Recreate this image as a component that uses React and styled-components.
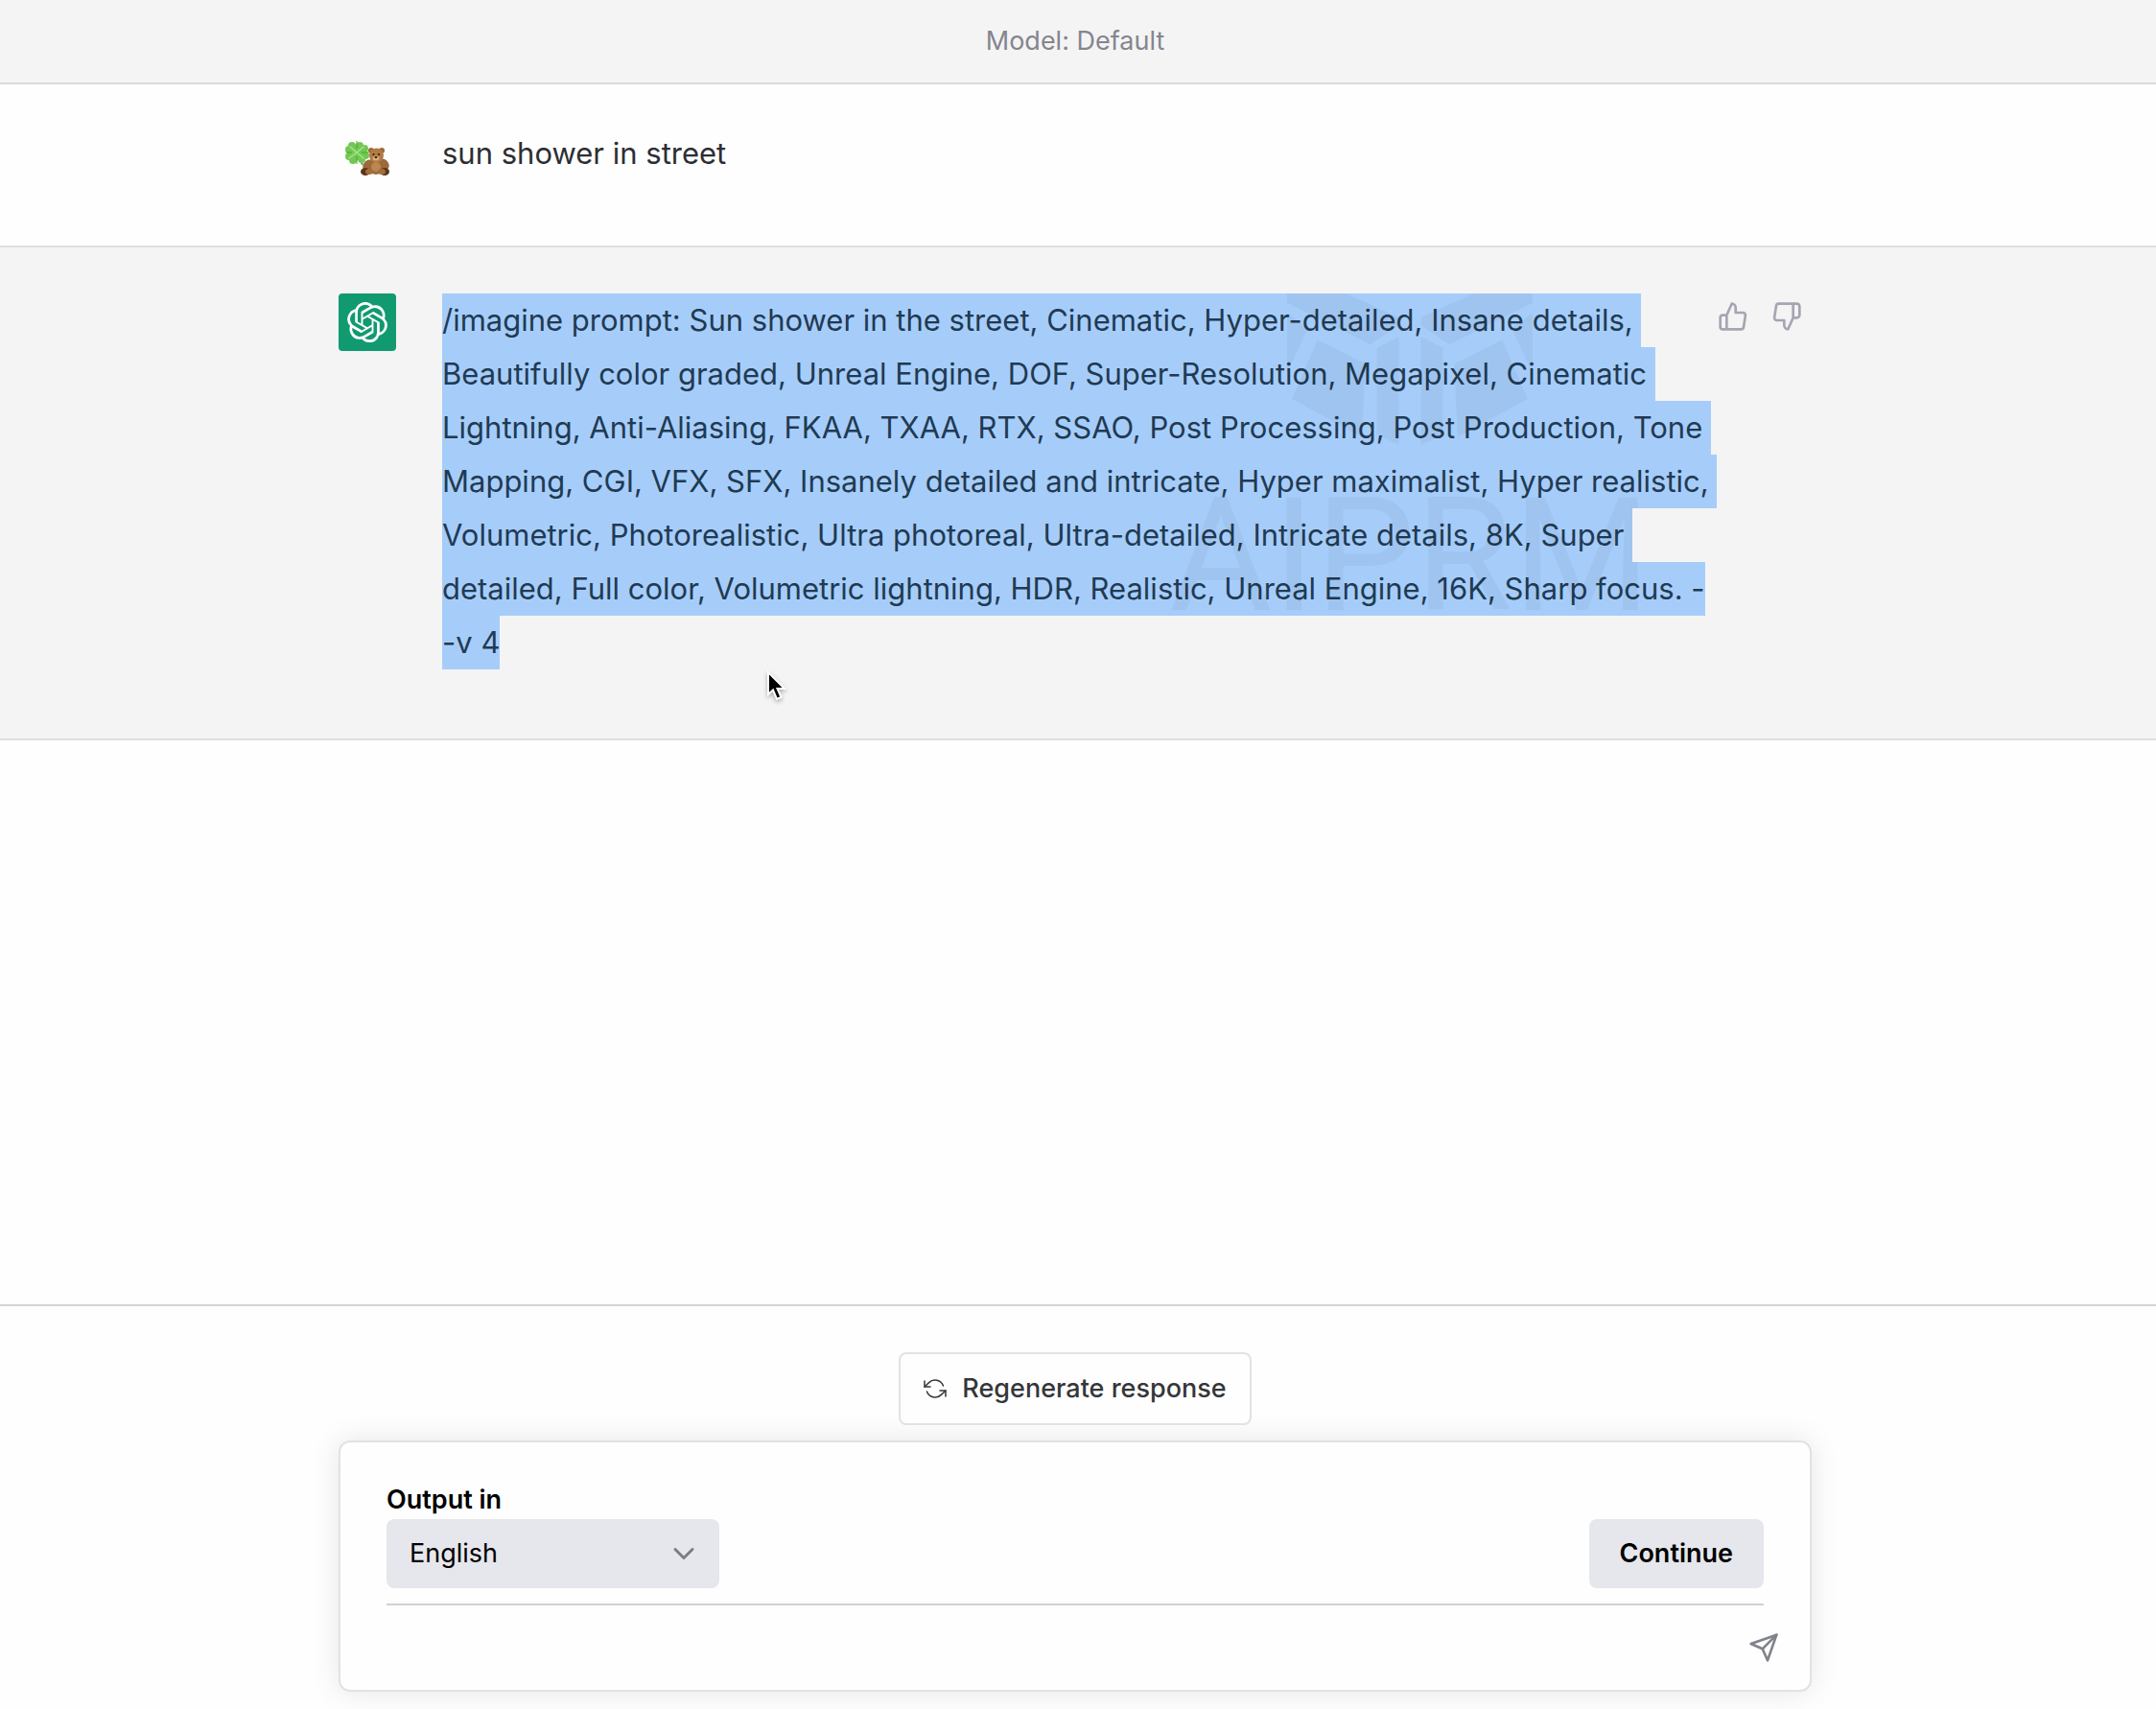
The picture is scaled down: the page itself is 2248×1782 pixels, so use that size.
import React from "react";
import styled, { createGlobalStyle } from "styled-components";
import { SiOpenai } from "react-icons/si";
import {
  FiChevronDown,
  FiRefreshCcw,
  FiSend,
  FiThumbsDown,
  FiThumbsUp,
} from "react-icons/fi";

const promptLines = [
  "/imagine prompt: Sun shower in the street, Cinematic, Hyper-detailed, Insane details, ",
  "Beautifully color graded, Unreal Engine, DOF, Super-Resolution, Megapixel, Cinematic ",
  "Lightning, Anti-Aliasing, FKAA, TXAA, RTX, SSAO, Post Processing, Post Production, Tone ",
  "Mapping, CGI, VFX, SFX, Insanely detailed and intricate, Hyper maximalist, Hyper realistic, ",
  "Volumetric, Photorealistic, Ultra photoreal, Ultra-detailed, Intricate details, 8K, Super ",
  "detailed, Full color, Volumetric lightning, HDR, Realistic, Unreal Engine, 16K, Sharp focus. -",
  "-v 4",
];

const CloverBear = () => (
  <svg width="60" height="40" viewBox="0 0 60 40" aria-hidden="true">
    <path
      d="M19 13c2 4 4 8 6 13"
      stroke="#5fae3c"
      strokeWidth="2"
      fill="none"
    />
    <g fill="#72c853">
      <circle cx="14" cy="6" r="4" />
      <circle cx="22" cy="6" r="4" />
      <circle cx="11" cy="10" r="4" />
      <circle cx="27" cy="9" r="4" />
      <circle cx="11" cy="17" r="4" />
      <circle cx="28" cy="16" r="4" />
      <circle cx="15" cy="21" r="4" />
      <circle cx="24" cy="20" r="4" />
      <circle cx="19" cy="13" r="8" />
    </g>
    <path
      d="M19 13L12 7M19 13L11 19M19 13L26 7M19 13L26 19"
      stroke="#a5e58a"
      strokeWidth="1.5"
      strokeLinecap="round"
    />
    <path
      d="M19 9V1M8 13H14M24 13H31M19 17V25"
      stroke="#4ca336"
      strokeWidth="1"
    />
    <g fill="#9c6a3a">
      <circle cx="34" cy="11" r="3" />
      <circle cx="45" cy="11" r="3" />
      <ellipse cx="39" cy="27" rx="9" ry="9" />
      <ellipse cx="30" cy="26" rx="4" ry="6" transform="rotate(35 30 26)" />
      <ellipse cx="48" cy="25" rx="4" ry="6" transform="rotate(-35 48 25)" />
    </g>
    <circle cx="39.500" cy="16" r="7.500" fill="#b07a45" />
    <ellipse cx="39" cy="28" rx="5" ry="5" fill="#bd8650" />
    <ellipse cx="28" cy="33" rx="5" ry="4" fill="#5b3519" />
    <ellipse cx="48" cy="33" rx="5" ry="4" fill="#5b3519" />
    <ellipse cx="32" cy="33" rx="4" ry="3" fill="#a26e3c" />
    <ellipse cx="45" cy="33" rx="4" ry="3" fill="#a26e3c" />
    <ellipse cx="39" cy="19" rx="3.500" ry="2.500" fill="#d9ae78" />
    <circle cx="36.500" cy="15" r="1" fill="#2b170a" />
    <circle cx="42" cy="15" r="1" fill="#2b170a" />
    <ellipse cx="39" cy="18" rx="1.500" ry="1" fill="#2b170a" />
  </svg>
);

const WatermarkLogo = () => (
  <svg width="256" height="160" viewBox="65 30 768 480" aria-hidden="true">
    <g id="half">
      <path d="M65 30H250L415 105V130L325 190L65 60Z" />
      <path d="M65 90L130 140L65 280Z" />
      <path d="M160 175L310 250L300 480L80 360Z" />
      <path d="M345 200L415 165V505L345 470Z" />
    </g>
    <use href="#half" transform="matrix(-1 0 0 1 898 0)" />
  </svg>
);

const App = () => {
  return (
    <Page>
      <GlobalStyle />
      <Header>Model: Default</Header>
      <main>
        <Message>
          <Row $top={44} $bottom={56}>
            <UserAvatar>
              <CloverBear />
            </UserAvatar>
            <Prose>sun shower in street</Prose>
          </Row>
        </Message>
        <Message $shaded>
          <Row $top={48} $bottom={72}>
            <BotAvatar>
              <SiOpenai size={42} />
            </BotAvatar>
            <Prose>
              <Watermark aria-hidden="true">
                <WatermarkLogo />
                <WatermarkText>AIPRM</WatermarkText>
              </Watermark>
              {promptLines.map((line) => (
                <Line key={line}>
                  <Selected>{line}</Selected>
                </Line>
              ))}
            </Prose>
            <Actions>
              <IconButton aria-label="Good response">
                <FiThumbsUp size={32} />
              </IconButton>
              <IconButton aria-label="Bad response">
                <FiThumbsDown size={32} />
              </IconButton>
            </Actions>
          </Row>
          <Cursor width="24" height="36" viewBox="0 0 24 36">
            <path
              d="M3 3V26L8 21.500L12 31L16.500 29L12.500 20H20Z"
              fill="#000"
              stroke="#fff"
              strokeWidth="2"
            />
          </Cursor>
        </Message>
      </main>
      <Footer>
        <Column>
          <Regenerate type="button">
            <FiRefreshCcw size={24} strokeWidth={1.5} />
            Regenerate response
          </Regenerate>
          <Composer onSubmit={(e) => e.preventDefault()}>
            <Label htmlFor="language">Output in</Label>
            <Controls>
              <SelectWrap>
                <Select id="language" defaultValue="English">
                  <option>English</option>
                </Select>
                <Chevron size={36} />
              </SelectWrap>
              <Continue type="button">Continue</Continue>
            </Controls>
            <InputRow>
              <Input rows={1} aria-label="Message" />
              <SendButton aria-label="Send">
                <FiSend size={32} />
              </SendButton>
            </InputRow>
          </Composer>
        </Column>
      </Footer>
    </Page>
  );
};

export default App;

const GlobalStyle = createGlobalStyle`
  * {
    box-sizing: border-box;
  }
  body {
    margin: 0;
    background: #fefefe;
  }
  button, select, textarea {
    font: inherit;
    color: inherit;
    margin: 0;
  }
`;

const Page = styled.div`
  display: flex;
  flex-direction: column;
  min-height: 100vh;
  font-family: Inter, "Noto Sans", sans-serif;
  font-size: 27px;
  line-height: 40px;
  color: #000;
`;

const Header = styled.header`
  padding: 23px 6px 23px 0;
  border-bottom: 2px solid #dadadc;
  background: #f4f4f4;
  color: #85858f;
  text-align: center;
`;

const Message = styled.section`
  position: relative;
  padding-right: 6px;
  border-bottom: 2px solid #dededf;
  background: ${(p) => (p.$shaded ? "#f4f4f4" : "#fefefe")};
`;

const Column = styled.div`
  display: flex;
  flex-direction: column;
  align-items: center;
  gap: 16px;
  max-width: 1536px;
  margin: 0 auto;
`;

const Row = styled.div`
  display: flex;
  align-items: flex-start;
  max-width: 1536px;
  margin: 0 auto;
  padding: ${(p) => p.$top}px 0 ${(p) => p.$bottom}px;
`;

const UserAvatar = styled.div`
  display: flex;
  align-items: center;
  justify-content: center;
  flex: none;
  width: 60px;
  height: 68px;
  margin-right: 48px;
`;

const BotAvatar = styled(UserAvatar)`
  height: 60px;
  border-radius: 4px;
  background: #119a70;
  color: #fff;
`;

const Prose = styled.div`
  position: relative;
  flex: 1;
  min-width: 0;
  font-size: 31px;
  line-height: 56px;
  color: #2d2e33;
`;

const Line = styled.div`
  display: flex;
  white-space: pre;
  /* keeps the watermark inside the selection */
  &::after {
    content: "";
    position: relative;
    flex: 1;
    background: #f4f4f4;
  }
`;

const Selected = styled.span`
  flex: none;
  background: #a6cdfa;
  color: #213a52;
`;

const Watermark = styled.div`
  position: absolute;
  top: 0;
  left: 758px;
  display: flex;
  flex-direction: column;
  align-items: center;
  fill: rgba(0, 0, 0, 0.04);
  color: rgba(0, 0, 0, 0.04);
  pointer-events: none;
`;

const WatermarkText = styled.span`
  margin-top: 26px;
  font-family: Roboto, sans-serif;
  font-size: 165px;
  line-height: 176px;
`;

const Actions = styled.div`
  display: flex;
  gap: 8px;
  padding-right: 2px;
  color: #a5a5b3;
`;

const IconButton = styled.button`
  display: flex;
  padding: 8px;
  border: 0;
  background: none;
`;

const Cursor = styled.svg`
  position: absolute;
  top: 440px;
  left: 798px;
  filter: drop-shadow(0 2px 2px rgba(0, 0, 0, 0.3));
`;

const Footer = styled.footer`
  margin-top: auto;
  padding: 48px 6px 18px 0;
  border-top: 2px solid #d3d4d8;
`;

const Regenerate = styled.button`
  position: relative;
  display: flex;
  align-items: center;
  gap: 16px;
  height: 76px;
  padding: 0 24px;
  border: 2px solid #e2e2e3;
  border-radius: 8px;
  background: #fefefe;
  color: #353639;
  font-weight: 500;
`;

const Composer = styled.form`
  width: 100%;
  padding-top: 40px;
  border: 2px solid #e2e2e3;
  border-radius: 12px;
  background: #fefefe;
  box-shadow: 0 0 30px rgba(0, 0, 0, 0.1);
`;

const Label = styled.label`
  display: block;
  margin: 0 48px;
  font-weight: 600;
`;

const Controls = styled.div`
  display: flex;
  justify-content: space-between;
  margin: 0 48px;
  padding-bottom: 16px;
  border-bottom: 2px solid #d2d2d5;
`;

const SelectWrap = styled.div`
  position: relative;
  width: 347px;
`;

const Select = styled.select`
  appearance: none;
  width: 100%;
  height: 72px;
  padding: 0 24px;
  border: 0;
  border-radius: 8px;
  background: #e6e7ec;
`;

const Chevron = styled(FiChevronDown)`
  position: absolute;
  top: 18px;
  right: 19px;
  color: #7b7d87;
  pointer-events: none;
`;

const Continue = styled.button`
  height: 72px;
  padding: 0 32px;
  border: 0;
  border-radius: 8px;
  background: #e6e7ec;
  font-weight: 600;
`;

const InputRow = styled.div`
  display: flex;
  align-items: center;
  height: 88px;
  padding: 0 16px 0 48px;
`;

const Input = styled.textarea`
  flex: 1;
  height: 40px;
  padding: 0;
  border: 0;
  outline: 0;
  resize: none;
  background: transparent;
`;

const SendButton = styled.button`
  display: flex;
  padding: 16px;
  border: 0;
  background: none;
  color: #808289;
`;
